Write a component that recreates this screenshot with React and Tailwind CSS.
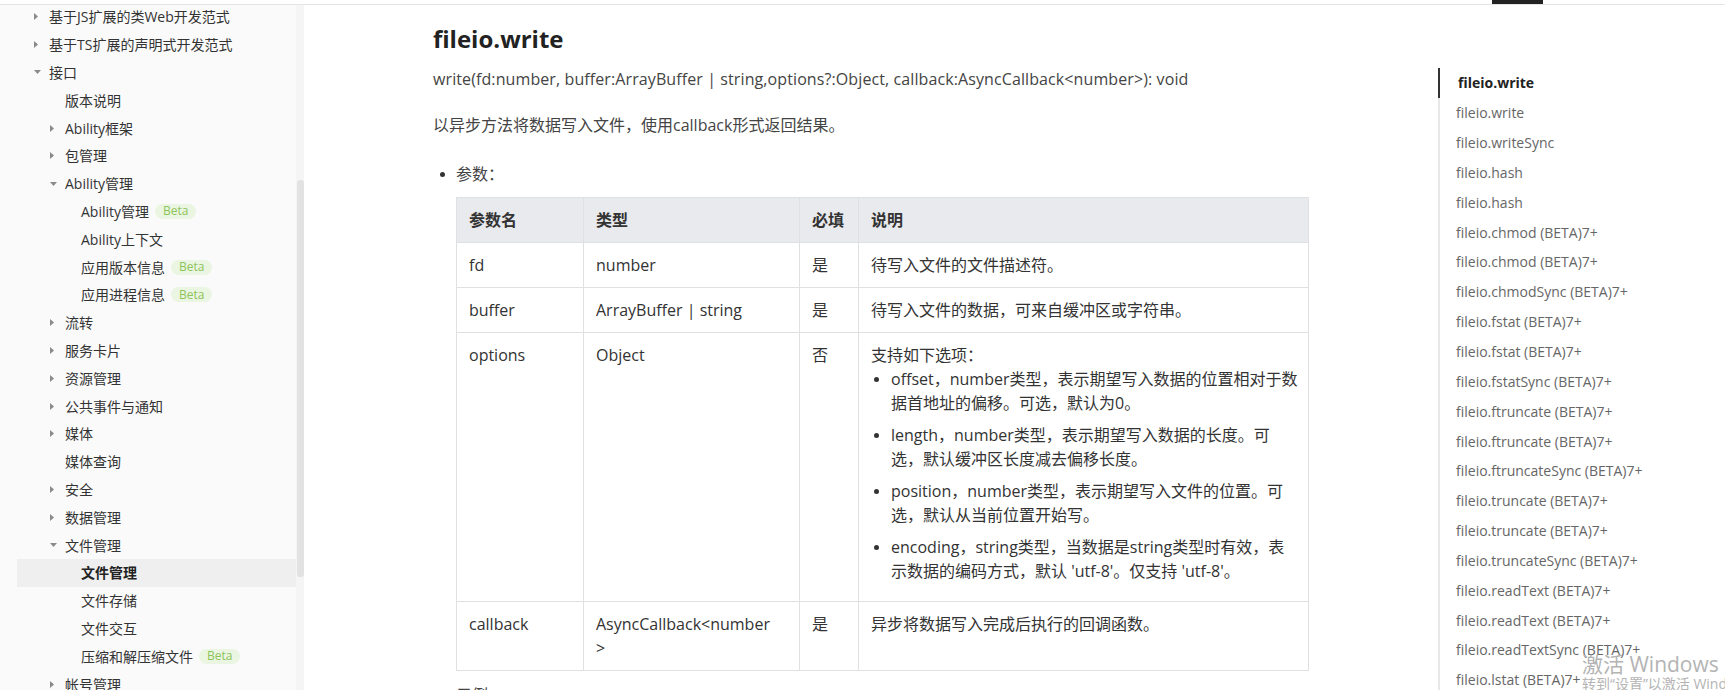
const NAV = [
  { t: '基于JS扩展的类Web开发范式', l: 1, a: 'right' },
  { t: '基于TS扩展的声明式开发范式', l: 1, a: 'right' },
  { t: '接口', l: 1, a: 'down' },
  { t: '版本说明', l: 2 },
  { t: 'Ability框架', l: 2, a: 'right' },
  { t: '包管理', l: 2, a: 'right' },
  { t: 'Ability管理', l: 2, a: 'down' },
  { t: 'Ability管理', l: 3, beta: true },
  { t: 'Ability上下文', l: 3 },
  { t: '应用版本信息', l: 3, beta: true },
  { t: '应用进程信息', l: 3, beta: true },
  { t: '流转', l: 2, a: 'right' },
  { t: '服务卡片', l: 2, a: 'right' },
  { t: '资源管理', l: 2, a: 'right' },
  { t: '公共事件与通知', l: 2, a: 'right' },
  { t: '媒体', l: 2, a: 'right' },
  { t: '媒体查询', l: 2 },
  { t: '安全', l: 2, a: 'right' },
  { t: '数据管理', l: 2, a: 'right' },
  { t: '文件管理', l: 2, a: 'down' },
  { t: '文件管理', l: 3, active: true },
  { t: '文件存储', l: 3 },
  { t: '文件交互', l: 3 },
  { t: '压缩和解压缩文件', l: 3, beta: true },
  { t: '帐号管理', l: 2, a: 'right' },
]

const LEVEL_PAD = { 1: 'pl-[17px]', 2: 'pl-[33px]', 3: 'pl-[49px]' }

const TOC = [
  'fileio.write', 'fileio.write', 'fileio.writeSync', 'fileio.hash', 'fileio.hash',
  'fileio.chmod (BETA)7+', 'fileio.chmod (BETA)7+', 'fileio.chmodSync (BETA)7+',
  'fileio.fstat (BETA)7+', 'fileio.fstat (BETA)7+', 'fileio.fstatSync (BETA)7+',
  'fileio.ftruncate (BETA)7+', 'fileio.ftruncate (BETA)7+', 'fileio.ftruncateSync (BETA)7+',
  'fileio.truncate (BETA)7+', 'fileio.truncate (BETA)7+', 'fileio.truncateSync (BETA)7+',
  'fileio.readText (BETA)7+', 'fileio.readText (BETA)7+', 'fileio.readTextSync (BETA)7+',
  'fileio.lstat (BETA)7+',
]

const OPTIONS = [
  ['offset，number类型，表示期望写入数据的位置相对于数', '据首地址的偏移。可选，默认为0。'],
  ['length，number类型，表示期望写入数据的长度。可', '选，默认缓冲区长度减去偏移长度。'],
  ['position，number类型，表示期望写入文件的位置。可', '选，默认从当前位置开始写。'],
  ['encoding，string类型，当数据是string类型时有效，表', "示数据的编码方式，默认 'utf-8'。仅支持 'utf-8'。"],
]

function Arrow({ dir }) {
  if (dir === 'right') {
    return (
      <svg width="4" height="7" viewBox="0 0 4 7" className="fill-[#8a8a8a]">
        <polygon points="0,0 4,3.5 0,7" />
      </svg>
    )
  }
  return (
    <svg width="7" height="4" viewBox="0 0 7 4" className="fill-[#8a8a8a]">
      <polygon points="0,0 7,0 3.5,4" />
    </svg>
  )
}

function Beta() {
  return (
    <span className="ml-[6px] inline-flex items-center h-[15px] px-[8px] rounded-full bg-[#ebf6e2] text-[#8cc35a] text-[12px] leading-none">
      Beta
    </span>
  )
}

function Dot({ cls }) {
  return <span className={`block w-[5px] h-[5px] rounded-full bg-[#333] ${cls}`} />
}

const cell = 'border border-[#dfe0e2] px-[12px] py-[10px]'

export default function App() {
  return (
    <div className="w-[1725px] h-[690px] overflow-hidden bg-white flex flex-col relative font-['Open_Sans','Noto_Sans_CJK_SC',sans-serif] text-[#333]">
      {/* top strip */}
      <div className="h-[5px] shrink-0 border-b border-[#e4e4e4] flex">
        <div className="ml-[1492px] w-[51px] h-[4px] bg-[#222]" />
      </div>

      <div className="flex flex-1 min-h-0">
        {/* sidebar */}
        <aside className="w-[296px] shrink-0 bg-[#fafafa] overflow-hidden">
          <ul className="ml-[17px] -mt-[2px] text-[14px]">
            {NAV.map((n, i) => (
              <li
                key={i}
                className={`h-[27.8px] flex items-center ${LEVEL_PAD[n.l]} ${n.active ? 'bg-[#efefef] font-bold text-[#222]' : 'text-[#333]'}`}
              >
                <span className="w-[15px] shrink-0 flex items-center">{n.a && <Arrow dir={n.a} />}</span>
                <span className="whitespace-nowrap">{n.t}</span>
                {n.beta && <Beta />}
              </li>
            ))}
          </ul>
        </aside>
        <div className="w-[8px] shrink-0 bg-[#f5f5f5]">
          <div className="ml-[1px] mt-[175px] w-[7px] h-[397px] rounded-[3px] bg-[#e2e2e2]" />
        </div>

        {/* content */}
        <main className="flex flex-1 min-w-0">
          <div className="ml-[129px] w-[876px] shrink-0 pt-[16px]">
            <h1 className="text-[24px] leading-[36px] font-bold text-[#222]">fileio.write</h1>
            <p className="mt-[10px] text-[16px] tracking-[0.1px] leading-[24px] text-[#444] whitespace-nowrap">
              write(fd:number, buffer:ArrayBuffer | string,options?:Object, callback:AsyncCallback&lt;number&gt;): void
            </p>
            <p className="mt-[22px] text-[16px] leading-[24px] text-[#444]">以异步方法将数据写入文件，使用callback形式返回结果。</p>

            <ul className="mt-[25px] text-[16px] leading-[24px]">
              <li>
                <div className="flex items-center text-[#444]">
                  <span className="w-[23px] flex"><Dot cls="ml-[7px]" /></span>
                  参数：
                </div>
                <table className="mt-[11px] ml-[23px] w-[853px] border-collapse table-fixed text-[16px] leading-[24px] text-[#333]">
                  <colgroup>
                    <col className="w-[127px]" />
                    <col className="w-[216px]" />
                    <col className="w-[59px]" />
                    <col />
                  </colgroup>
                  <thead>
                    <tr className="bg-[#e9eaed]">
                      {['参数名', '类型', '必填', '说明'].map((h) => (
                        <th key={h} className={`${cell} text-left font-bold text-[#333]`}>{h}</th>
                      ))}
                    </tr>
                  </thead>
                  <tbody className="align-top">
                    <tr>
                      <td className={cell}>fd</td>
                      <td className={cell}>number</td>
                      <td className={cell}>是</td>
                      <td className={cell}>待写入文件的文件描述符。</td>
                    </tr>
                    <tr>
                      <td className={cell}>buffer</td>
                      <td className={cell}>ArrayBuffer | string</td>
                      <td className={cell}>是</td>
                      <td className={cell}>待写入文件的数据，可来自缓冲区或字符串。</td>
                    </tr>
                    <tr>
                      <td className={cell}>options</td>
                      <td className={cell}>Object</td>
                      <td className={cell}>否</td>
                      <td className={cell}>
                        <div>支持如下选项：</div>
                        <ul>
                          {OPTIONS.map((o, i) => (
                            <li key={i} className="flex mb-[8px]">
                              <span className="w-[20px] shrink-0 pt-[10px]"><Dot cls="ml-[3px]" /></span>
                              <span className="whitespace-nowrap">
                                {o[0]}
                                <br />
                                {o[1]}
                              </span>
                            </li>
                          ))}
                        </ul>
                      </td>
                    </tr>
                    <tr>
                      <td className={cell}>callback</td>
                      <td className={cell}>
                        AsyncCallback&lt;number
                        <br />
                        &gt;
                      </td>
                      <td className={cell}>是</td>
                      <td className={cell}>异步将数据写入完成后执行的回调函数。</td>
                    </tr>
                  </tbody>
                </table>
              </li>
              <li className="mt-[12px] flex items-center text-[#444]">
                <span className="w-[23px] flex"><Dot cls="ml-[7px]" /></span>
                示例：
              </li>
            </ul>
          </div>

          {/* toc */}
          <nav className="ml-[129px] w-[287px] shrink-0 pt-[63px]">
            <ul className="border-l-2 border-[#e8e8e8] text-[14px]">
              {TOC.map((t, i) => (
                <li
                  key={i}
                  className={`h-[29.85px] flex items-center whitespace-nowrap ${i === 0 ? '-ml-[2px] pl-[18px] border-l-2 border-[#333] font-bold text-[#222]' : 'pl-[16px] text-[#666]'}`}
                >
                  {t}
                </li>
              ))}
            </ul>
          </nav>
        </main>
      </div>

      {/* windows activation watermark */}
      <div className="absolute left-[1582px] top-[652px] text-[#b4b4b4] whitespace-nowrap pointer-events-none">
        <div className="text-[21px] leading-[24px]">激活 Windows</div>
        <div className="text-[14px] leading-[16px]">转到“设置”以激活 Windows。</div>
      </div>
    </div>
  )
}
